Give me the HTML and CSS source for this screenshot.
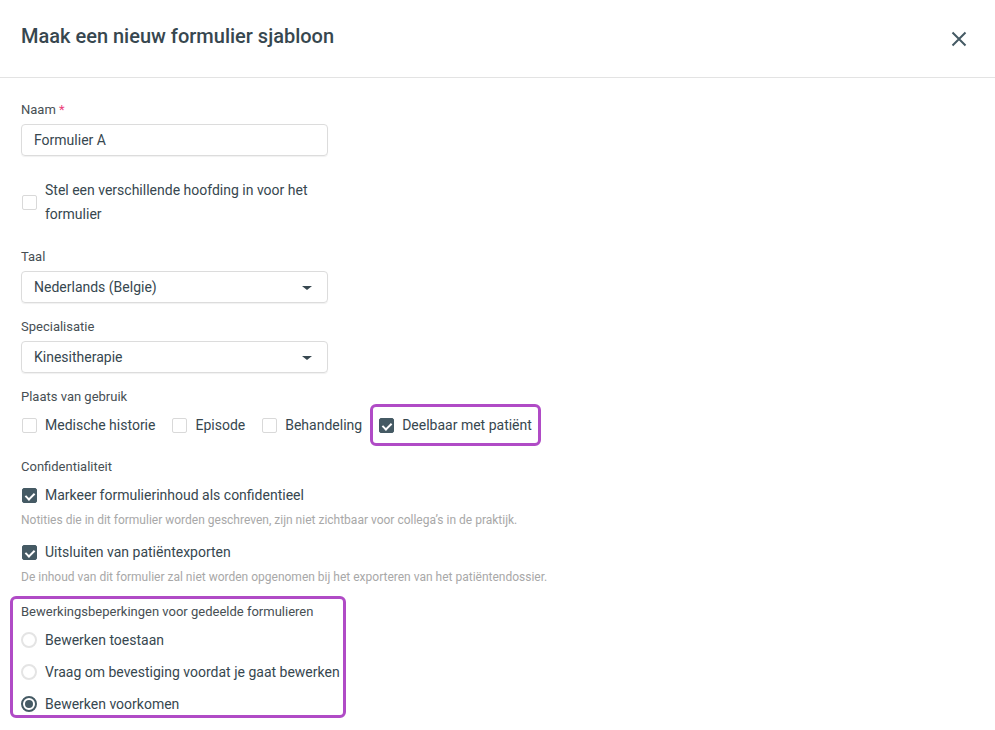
FILE: index.html
```html
<!DOCTYPE html>
<html lang="nl">
<head>
    <meta charset="UTF-8">
    <meta name="viewport" content="width=device-width, initial-scale=1.0">
    <title>Maak een nieuw formulier sjabloon</title>
    <link rel="stylesheet" href="styles.css">
</head>
<body>
    <div class="modal">
        <!-- Header -->
        <div class="modal-header">
            <h2>Maak een nieuw formulier sjabloon</h2>
            <button class="close" aria-label="Sluiten">
                <svg width="16" height="16" viewBox="0 0 16 16"><path d="M1.5 1.5 L14.5 14.5 M14.5 1.5 L1.5 14.5" stroke="#455a64" stroke-width="2" fill="none"/></svg>
            </button>
        </div>

        <!-- Form body -->
        <div class="modal-body">
            <div class="field">
                <label class="field-label">Naam <span class="required">*</span></label>
                <div class="input">Formulier A</div>
            </div>

            <div class="check multi">
                <span class="box"></span>
                <span class="check-text">Stel een verschillende hoofding in voor het formulier</span>
            </div>

            <div class="field">
                <label class="field-label">Taal</label>
                <div class="input select">Nederlands (Belgie)<span class="caret"></span></div>
            </div>

            <div class="field">
                <label class="field-label">Specialisatie</label>
                <div class="input select">Kinesitherapie<span class="caret"></span></div>
            </div>

            <div class="field tight">
                <label class="field-label">Plaats van gebruik</label>
                <div class="check-row">
                    <div class="check"><span class="box"></span>Medische historie</div>
                    <div class="check"><span class="box"></span>Episode</div>
                    <div class="check"><span class="box"></span>Behandeling</div>
                    <div class="check highlight"><span class="box checked"></span>Deelbaar met patiënt</div>
                </div>
            </div>

            <div class="field conf">
                <label class="field-label">Confidentialiteit</label>
                <div class="check tall"><span class="box checked"></span>Markeer formulierinhoud als confidentieel</div>
                <p class="help">Notities die in dit formulier worden geschreven, zijn niet zichtbaar voor collega’s in de praktijk.</p>
                <div class="check tall"><span class="box checked"></span>Uitsluiten van patiëntexporten</div>
                <p class="help last">De inhoud van dit formulier zal niet worden opgenomen bij het exporteren van het patiëntendossier.</p>
            </div>

            <div class="radio-group">
                <label class="field-label">Bewerkingsbeperkingen voor gedeelde formulieren</label>
                <div class="radio"><span class="dot"></span>Bewerken toestaan</div>
                <div class="radio"><span class="dot"></span>Vraag om bevestiging voordat je gaat bewerken</div>
                <div class="radio"><span class="dot on"></span>Bewerken voorkomen</div>
            </div>
        </div>
    </div>
</body>
</html>
```

FILE: styles.css
```css
body {
    font-family: Roboto, "Noto Sans", Arial, sans-serif;
    background-color: #ffffff;
    color: #37474f;
    margin: 0;
    padding: 0;
}
.modal {
    width: 995px;
    background-color: white;
}
.modal-header {
    height: 77px;
    border-bottom: 1px solid #e3e3e3;
    display: flex;
    align-items: center;
    justify-content: space-between;
    padding: 0 28px 0 21px;
}
.modal-header h2 {
    margin: 0 0 6px;
    font-size: 20px;
    font-weight: 500;
    color: #37474f;
}
.close {
    background: none;
    border: none;
    padding: 0;
    width: 16px;
    height: 16px;
    cursor: pointer;
    display: flex;
}
.modal-body {
    padding: 24px 21px 0;
}
.field {
    margin-bottom: 16px;
}
.field.tight {
    margin-bottom: 13px;
}
.field.conf {
    margin-bottom: 11px;
}
.field-label {
    display: block;
    font-size: 13px;
    color: #474f54;
    line-height: 16px;
    margin-bottom: 6px;
}
.required {
    color: #ec407a;
}
.input {
    width: 307px;
    height: 32px;
    box-sizing: border-box;
    border: 1px solid #dcdcdc;
    border-radius: 4px;
    box-shadow: 0 1px 1px rgba(0, 0, 0, 0.06);
    padding: 0 12px;
    font-size: 14px;
    line-height: 30px;
    color: #37474f;
}
.select {
    position: relative;
}
.caret {
    position: absolute;
    right: 15px;
    top: 14px;
    border-left: 5px solid transparent;
    border-right: 5px solid transparent;
    border-top: 4px solid #37474f;
}
.check {
    display: flex;
    align-items: center;
    font-size: 14px;
    line-height: 24px;
    color: #37474f;
}
.check.tall {
    line-height: 30px;
}
.conf .field-label {
    margin-bottom: 5px;
}
.check.multi {
    width: 300px;
    margin: 22px 0 23px;
}
.check-text {
    flex: 1;
}
.box {
    width: 15px;
    height: 15px;
    box-sizing: border-box;
    border: 1px solid #d9d9d9;
    border-radius: 2px;
    margin: 0 8px 0 1px;
    flex-shrink: 0;
    position: relative;
}
.box.checked {
    background-color: #455a64;
    border-color: #455a64;
}
.box.checked::after {
    content: "";
    position: absolute;
    left: 4px;
    top: 2px;
    width: 4px;
    height: 7px;
    border: solid white;
    border-width: 0 2px 2px 0;
    transform: rotate(45deg);
}
.check-row {
    display: flex;
    align-items: center;
    gap: 16px;
    margin-top: -7px;
}
.highlight {
    border: 3px solid #b04bc6;
    border-radius: 6px;
    padding: 6px 6px 6px 5px;
    margin-left: -8px;
}
.help {
    font-size: 12px;
    color: #a8a8a8;
    margin: 2px 0 9px;
    line-height: 16px;
}
.help.last {
    margin-bottom: 0;
}
.radio-group {
    border: 3px solid #b04bc6;
    border-radius: 6px;
    width: 336px;
    height: 122px;
    box-sizing: border-box;
    margin-left: -11px;
    padding: 5px 0 0 8px;
    overflow: hidden;
}
.radio-group .field-label {
    margin-bottom: 1px;
}
.radio {
    display: flex;
    align-items: center;
    font-size: 14px;
    line-height: 24px;
    margin-top: 8px;
    white-space: nowrap;
    color: #37474f;
}
.dot {
    width: 16px;
    height: 16px;
    box-sizing: border-box;
    border: 2px solid #e4e4e4;
    border-radius: 50%;
    margin-right: 8px;
    position: relative;
}
.dot.on {
    border-color: #455a64;
}
.dot.on::after {
    content: "";
    position: absolute;
    left: 2px;
    top: 2px;
    width: 8px;
    height: 8px;
    border-radius: 50%;
    background-color: #455a64;
}
```
